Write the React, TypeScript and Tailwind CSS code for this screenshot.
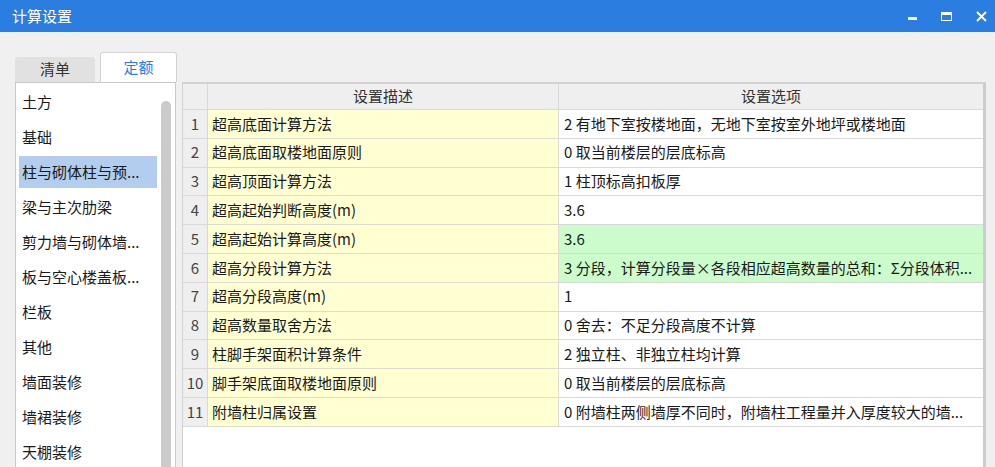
import React from "react";

const FONT = { fontFamily: '"Noto Sans CJK SC", "Microsoft YaHei", sans-serif' };

const categories = [
  "土方",
  "基础",
  "柱与砌体柱与预...",
  "梁与主次肋梁",
  "剪力墙与砌体墙...",
  "板与空心楼盖板...",
  "栏板",
  "其他",
  "墙面装修",
  "墙裙装修",
  "天棚装修",
];

const rows = [
  { desc: "超高底面计算方法", opt: "2 有地下室按楼地面，无地下室按室外地坪或楼地面" },
  { desc: "超高底面取楼地面原则", opt: "0 取当前楼层的层底标高" },
  { desc: "超高顶面计算方法", opt: "1 柱顶标高扣板厚" },
  { desc: "超高起始判断高度(m)", opt: "3.6" },
  { desc: "超高起始计算高度(m)", opt: "3.6", green: true },
  { desc: "超高分段计算方法", opt: "3 分段，计算分段量×各段相应超高数量的总和：Σ分段体积...", green: true },
  { desc: "超高分段高度(m)", opt: "1" },
  { desc: "超高数量取舍方法", opt: "0 舍去：不足分段高度不计算" },
  { desc: "柱脚手架面积计算条件", opt: "2 独立柱、非独立柱均计算" },
  { desc: "脚手架底面取楼地面原则", opt: "0 取当前楼层的层底标高" },
  { desc: "附墙柱归属设置", opt: "0 附墙柱两侧墙厚不同时，附墙柱工程量并入厚度较大的墙..." },
];

function TitleBar() {
  return (
    <div className="h-8 shrink-0 bg-[#2b7de0] flex items-center justify-between text-white">
      <div className="pl-3 text-[15px]">计算设置</div>
      <div className="flex items-center gap-[24px] pr-[8px]">
        <div className="w-[9px] h-[3px] bg-white mt-[5px]" />
        <div className="w-[11px] h-[9px] border-[1.5px] border-white border-t-[3px]" />
        <svg width="11" height="11" viewBox="0 0 11 11">
          <path d="M1 1 L10 10 M10 1 L1 10" stroke="white" strokeWidth="1.8" />
        </svg>
      </div>
    </div>
  );
}

function Tabs() {
  return (
    <div className="flex items-end h-[30px] gap-[5px]">
      <div className="w-[80px] h-[25px] bg-[#e1e1e1] rounded-t-[3px] flex items-center justify-center text-[15px] text-[#333]">
        清单
      </div>
      <div className="w-[77px] h-[30px] bg-white border border-b-0 border-[#d2d2d2] rounded-t-[3px] flex items-center justify-center text-[15px] text-[#2b7de0]">
        定额
      </div>
    </div>
  );
}

function CategoryList() {
  return (
    <div className="relative w-[161px] h-full bg-white border border-b-0 border-[#c9c9c9] overflow-hidden">
      <div className="pt-[3px] pl-[3px] w-[141px]">
        {categories.map((c, i) => (
          <div
            key={c}
            className={
              "h-[32px] mb-[3px] pl-[3px] flex items-center text-[15px] text-[#1a1a1a] whitespace-nowrap " +
              (i === 2 ? "bg-[#b3cdee]" : "")
            }
          >
            {c}
          </div>
        ))}
      </div>
      <div className="absolute right-[4px] top-[18px] bottom-0 w-[10px] rounded-t-full bg-[#cbcbcb]" />
    </div>
  );
}

function SettingsTable() {
  return (
    <div className="w-[804px] h-full bg-white border-t-2 border-l border-r-[3px] border-[#d2d2d2] border-r-[#cdcdcd] flex flex-col">
      <div className="flex h-[26px] bg-[#efefef] border-b border-[#d9d9d9] text-[15px] text-[#333]">
        <div className="w-[25px] border-r border-[#d9d9d9]" />
        <div className="w-[351px] border-r border-[#d9d9d9] flex items-center justify-center">设置描述</div>
        <div className="flex-1 flex items-center justify-center">设置选项</div>
      </div>
      {rows.map((r, i) => (
        <div key={i} className="flex h-[28.8px] text-[15px]">
          <div className="w-[25px] bg-[#efefef] border-r border-b border-[#d9d9d9] flex items-center justify-center text-[#444]">
            {i + 1}
          </div>
          <div className="w-[351px] bg-[#ffffd2] border-r border-b border-[#dcdcd0] flex items-center pl-[4px] text-[#1a1a1a] whitespace-nowrap">
            {r.desc}
          </div>
          <div
            className={
              "flex-1 border-b border-[#d9d9d9] flex items-center pl-[5px] text-[#1a1a1a] whitespace-nowrap overflow-hidden " +
              (r.green ? "bg-[#ccfccc]" : "bg-white")
            }
          >
            {r.opt}
          </div>
        </div>
      ))}
      <div className="flex-1 bg-white" />
    </div>
  );
}

export default function App() {
  return (
    <div className="w-[995px] h-[467px] overflow-hidden bg-[#f0f0f0] flex flex-col" style={FONT}>
      <TitleBar />
      <div className="flex-1 flex flex-col pl-[15px] pt-[20px] min-h-0">
        <Tabs />
        <div className="flex-1 flex min-h-0 gap-[6px]">
          <CategoryList />
          <SettingsTable />
        </div>
      </div>
    </div>
  );
}
